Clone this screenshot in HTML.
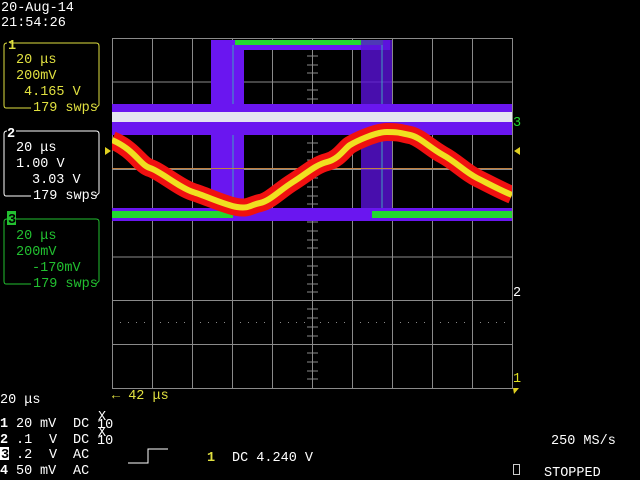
<!DOCTYPE html>
<html><head><meta charset="utf-8"><style>
html,body{margin:0;padding:0;background:#000;width:640px;height:480px;overflow:hidden}
svg{position:absolute;left:0;top:0}
text{font-family:"Liberation Mono","DejaVu Sans Mono",monospace;font-size:13.5px;white-space:pre}
</style></head><body>
<svg width="640" height="480" viewBox="0 0 640 480" xml:space="preserve">
<defs>
<clipPath id="c"><rect x="112" y="38" width="400" height="350"/></clipPath>
</defs>
<g stroke="#8a8a8a" stroke-width="1" fill="none">
<rect x="112.5" y="38.5" width="400" height="350"/>
<path d="M152.5 38V388M192.5 38V388M232.5 38V388M272.5 38V388M312.5 38V388M352.5 38V388M392.5 38V388M432.5 38V388M472.5 38V388"/>
<path d="M112 82H512M112 125.5H512M112 169.5H512M112 213.5H512M112 257H512M112 300.5H512M112 344.5H512"/>
<path d="M307 47H318M307 56H318M307 65H318M307 73H318M307 90H318M307 99H318M307 108H318M307 117H318M307 134H318M307 143H318M307 152H318M307 160H318M307 178H318M307 187H318M307 196H318M307 204H318M307 222H318M307 231H318M307 240H318M307 248H318M307 266H318M307 275H318M307 284H318M307 292H318M307 309H318M307 318H318M307 327H318M307 336H318M307 353H318M307 362H318M307 371H318M307 379H318"/>
</g>
<line x1="120" y1="322.5" x2="510" y2="322.5" stroke="#888" stroke-dasharray="1 7"/>
<g clip-path="url(#c)">
<rect x="211" y="40" width="33" height="181" fill="#6a16f0"/>
<rect x="215" y="40" width="175" height="10" fill="#6a16f0"/>
<rect x="235" y="40" width="148" height="5" fill="#22d830"/>
<rect x="361" y="40" width="31" height="181" fill="#5a12d8" opacity="0.8"/>
<line x1="233" y1="45" x2="233" y2="220" stroke="#40a0c0"/>
<line x1="382" y1="45" x2="382" y2="220" stroke="#40a0c0"/>
<rect x="112" y="104" width="400" height="31" fill="#6a16f0"/>
<rect x="112" y="112" width="400" height="10" fill="#e4e4f0"/>
<rect x="112" y="208" width="400" height="13" fill="#6a16f0"/>
<rect x="112" y="211" width="121" height="7" fill="#22d830"/>
<rect x="372" y="211" width="140" height="7" fill="#22d830"/>
<line x1="112" y1="168.5" x2="512" y2="168.5" stroke="#c08040"/>
<path d="M112 140 C135 150,140 165,150 168 S180 188,193 192 S225 205,237 207 S250 205,260 203 S280 190,293 182 S315 165,327 162 S345 148,350 145 S375 132,387 132 S400 133,410 135 S430 148,443 155 S465 172,477 178 S500 190,512 195" fill="none" stroke="#f01010" stroke-width="18"/>
<path d="M112 140 C135 150,140 165,150 168 S180 188,193 192 S225 205,237 207 S250 205,260 203 S280 190,293 182 S315 165,327 162 S345 148,350 145 S375 132,387 132 S400 133,410 135 S430 148,443 155 S465 172,477 178 S500 190,512 195" fill="none" stroke="#f0e020" stroke-width="6"/>
</g>
<path d="M105 147 L111 151 L105 155Z" fill="#e0d020"/>
<path d="M520 147 L514 151 L520 155Z" fill="#e0d020"/>
<text x="513" y="126" fill="#22d830">3</text>
<text x="513" y="296" fill="#fff">2</text>
<text x="513" y="382" fill="#e0e020">1</text>
<path d="M513 388H519L514 394Z" fill="#e0d020"/>
<text x="1" y="11" fill="#fff">20-Aug-14</text>
<text x="1" y="26" fill="#fff">21:54:26</text>
<g fill="none" stroke="#e0e040"><path d="M10 43H96Q99 43 99 46V105L96 108M31 108H6Q4 108 4 105V46Q4 43 7 43"/></g>
<text x="8" y="49" fill="#e0e040" font-weight="bold">1</text>
<text x="16" y="63" fill="#e0e040">20 μs</text>
<text x="16" y="79" fill="#e0e040">200mV</text>
<text x="24" y="95" fill="#e0e040">4.165 V</text>
<text x="33" y="111" fill="#e0e040">179 swps</text>
<g fill="none" stroke="#fff"><path d="M16 131H96Q99 131 99 134V193L96 196M31 196H6Q4 196 4 193V134Q4 131 7 131"/></g>
<text x="7" y="137" fill="#fff" font-weight="bold">2</text>
<text x="16" y="151" fill="#fff">20 μs</text>
<text x="16" y="167" fill="#fff">1.00 V</text>
<text x="32" y="183" fill="#fff">3.03 V</text>
<text x="33" y="199" fill="#fff">179 swps</text>
<g fill="none" stroke="#22c030"><path d="M16 219H96Q99 219 99 222V281L96 284M31 284H6Q4 284 4 281V222Q4 219 7 219"/></g>
<rect x="7" y="211" width="9" height="14" fill="#22c030"/>
<text x="8" y="223" fill="#000" font-weight="bold">3</text>
<text x="16" y="239" fill="#22c030">20 μs</text>
<text x="16" y="255" fill="#22c030">200mV</text>
<text x="32" y="271" fill="#22c030">-170mV</text>
<text x="33" y="287" fill="#22c030">179 swps</text>
<text x="112" y="399" fill="#e0e040">← 42 μs</text>
<text x="0" y="403" fill="#fff">20 μs</text>
<g fill="#fff">
<text x="0" y="427" font-weight="bold">1</text><text x="16" y="427">20</text><text x="40" y="427">mV</text><text x="73" y="427">DC</text>
<text x="0" y="443" font-weight="bold">2</text><text x="16" y="443">.1</text><text x="49" y="443">V</text><text x="73" y="443">DC</text>
<rect x="0" y="447" width="9" height="13"/><text x="1" y="458" fill="#000" font-weight="bold">3</text><text x="16" y="458">.2</text><text x="49" y="458">V</text><text x="73" y="458">AC</text>
<text x="0" y="474" font-weight="bold">4</text><text x="16" y="474">50</text><text x="40" y="474">mV</text><text x="73" y="474">AC</text>
<text x="98" y="420" font-size="7">X</text><text x="97" y="428" font-size="7">10</text>
<text x="98" y="436" font-size="7">X</text><text x="97" y="444" font-size="7">10</text>
</g>
<path d="M128 463H148V449H168" fill="none" stroke="#fff" stroke-width="1"/>
<text x="207" y="461" fill="#e0e040" font-weight="bold">1</text>
<text x="232" y="461" fill="#fff">DC 4.240 V</text>
<text x="551" y="444" fill="#fff">250 MS/s</text>
<rect x="513.5" y="464.5" width="6" height="10" fill="none" stroke="#ccc"/>
<text x="544" y="476" fill="#fff">STOPPED</text>
</svg>
</body></html>
